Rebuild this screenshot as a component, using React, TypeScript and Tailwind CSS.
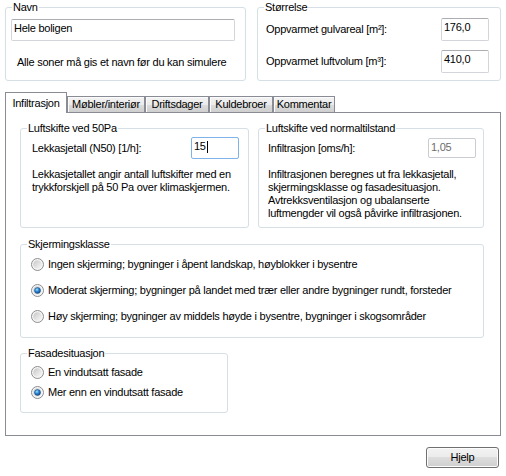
import type { ReactNode } from 'react';
import clsx from 'clsx';

const tabGradient = 'bg-[linear-gradient(to_bottom,#f3f3f3_0%,#ebebeb_50%,#dddddd_50%,#cfcfcf_100%)]';

function GroupBox({ title, className, children }: { title: string; className?: string; children: ReactNode }) {
  return (
    <fieldset className={clsx('rounded-[3px] border border-[#d5dfe5]', className)}>
      <legend className="ml-[6px] px-px leading-[13px]">{title}</legend>
      {children}
    </fieldset>
  );
}

function TextBox({ value, className, focused = false, disabled = false }: { value: string; className?: string; focused?: boolean; disabled?: boolean }) {
  return (
    <div
      className={clsx(
        'flex shrink-0 items-start rounded-[2px] border bg-white px-[2px] pt-[2px]',
        focused && 'border-[#7eb4ea]',
        disabled && 'border-[#c9cdd2] text-[#6d6d6d]',
        !focused && !disabled && 'border-[#d2d5da] border-t-[#abadb3]',
        className,
      )}
    >
      <span className="whitespace-nowrap">{value}</span>
      {focused ? <span className="ml-px mt-px h-[12px] w-px bg-black" /> : null}
    </div>
  );
}

function Radio({ label, checked = false }: { label: string; checked?: boolean }) {
  return (
    <label className="flex h-[13px] items-center gap-[4px] whitespace-nowrap">
      <svg width="13" height="13" viewBox="0 0 13 13" className="shrink-0">
        <defs>
          <linearGradient id="radio-fill" x1="0" y1="0" x2="1" y2="1">
            <stop offset="0" stopColor="#c6c6c6" />
            <stop offset="1" stopColor="#fafafa" />
          </linearGradient>
          <radialGradient id="radio-dot" cx="0.4" cy="0.35" r="0.7">
            <stop offset="0" stopColor="#9fe3ff" />
            <stop offset="0.45" stopColor="#2d8ad8" />
            <stop offset="1" stopColor="#0d3f76" />
          </radialGradient>
        </defs>
        <circle cx="6.5" cy="6.5" r="6" fill="#f5f5f5" stroke="#8b8d8f" />
        <circle cx="6.5" cy="6.5" r="4.3" fill="url(#radio-fill)" />
        {checked ? <circle cx="6.5" cy="6.5" r="3" fill="url(#radio-dot)" stroke="#1b4f85" strokeWidth="0.5" /> : null}
      </svg>
      <span>{label}</span>
    </label>
  );
}

const tabs = [
  { label: 'Møbler/interiør', width: 'w-[78px]' },
  { label: 'Driftsdager', width: 'w-[64px]' },
  { label: 'Kuldebroer', width: 'w-[64px]' },
  { label: 'Kommentar', width: 'w-[62px]' },
];

export default function App() {
  return (
    <div className="flex h-[476px] w-[506px] flex-col bg-white pl-[5px] pt-px font-['Liberation_Sans',Arial,sans-serif] text-[11px] leading-[13px] tracking-[-0.25px] text-black">
      <div className="flex gap-[11px]">
        <GroupBox title="Navn" className="h-[80px] w-[241px]">
          <div className="pl-[5px] pt-[5px]">
            <TextBox value="Hele boligen" className="h-[22px] w-[224px]" />
            <p className="ml-[6px] mt-[15px]">Alle soner må gis et navn før du kan simulere</p>
          </div>
        </GroupBox>
        <GroupBox title="Størrelse" className="h-[80px] w-[244px]">
          <div className="flex flex-col gap-[9px] pl-[8px] pr-[11px] pt-[4px]">
            <div className="flex items-center justify-between">
              <span>Oppvarmet gulvareal [m²]:</span>
              <TextBox value="176,0" className="h-[23px] w-[48px]" />
            </div>
            <div className="flex items-center justify-between">
              <span>Oppvarmet luftvolum [m³]:</span>
              <TextBox value="410,0" className="h-[23px] w-[48px]" />
            </div>
          </div>
        </GroupBox>
      </div>

      <div className="mt-[11px] flex h-[20px] items-end">
        <div className="relative z-10 -mb-px flex h-[21px] w-[62px] items-center justify-center border border-b-0 border-[#898c95] bg-white">
          Infiltrasjon
        </div>
        {tabs.map((tab) => (
          <div
            key={tab.label}
            className={clsx('flex h-[16px] items-center justify-center border border-b-0 border-[#898c95] shadow-[inset_1px_1px_0_#fbfbfb]', tabGradient, tab.width)}
          >
            {tab.label}
          </div>
        ))}
      </div>

      <div className="h-[324px] w-[496px] border border-[#898c95] pl-[14px] pt-[9px]">
        <div className="flex gap-[9px]">
          <GroupBox title="Luftskifte ved 50Pa" className="h-[106px] w-[229px]">
            <div className="pl-[11px] pr-[9px] pt-[2px]">
              <div className="flex items-center justify-between">
                <span>Lekkasjetall (N50) [1/h]:</span>
                <TextBox value="15" focused className="h-[22px] w-[48px]" />
              </div>
              <p className="mt-[9px] whitespace-nowrap">
                Lekkasjetallet angir antall luftskifter med en
                <br />
                trykkforskjell på 50 Pa over klimaskjermen.
              </p>
            </div>
          </GroupBox>
          <GroupBox title="Luftskifte ved normaltilstand" className="h-[106px] w-[226px]">
            <div className="pl-[9px] pr-[7px] pt-[3px]">
              <div className="flex items-center justify-between">
                <span>Infiltrasjon [oms/h]:</span>
                <TextBox value="1,05" disabled className="h-[20px] w-[48px]" />
              </div>
              <p className="mt-[10px] whitespace-nowrap">
                Infiltrasjonen beregnes ut fra lekkasjetall,
                <br />
                skjermingsklasse og fasadesituasjon.
                <br />
                Avtrekksventilasjon og ubalanserte
                <br />
                luftmengder vil også påvirke infiltrasjonen.
              </p>
            </div>
          </GroupBox>
        </div>

        <GroupBox title="Skjermingsklasse" className="mt-[10px] h-[100px] w-[464px]">
          <div className="flex flex-col gap-[13px] pl-[10px] pt-[7px]">
            <Radio label="Ingen skjerming; bygninger i åpent landskap, høyblokker i bysentre" />
            <Radio label="Moderat skjerming; bygninger på landet med trær eller andre bygninger rundt, forsteder" checked />
            <Radio label="Høy skjerming; bygninger av middels høyde i bysentre, bygninger i skogsområder" />
          </div>
        </GroupBox>

        <GroupBox title="Fasadesituasjon" className="mt-[9px] h-[66px] w-[208px]">
          <div className="flex flex-col gap-[7px] pl-[10px] pt-[6px]">
            <Radio label="En vindutsatt fasade" />
            <Radio label="Mer enn en vindutsatt fasade" checked />
          </div>
        </GroupBox>
      </div>

      <button
        type="button"
        className={clsx('mr-[7px] mt-[11px] h-[21px] w-[73px] self-end rounded-[3px] border border-[#707070] shadow-[inset_0_0_0_1px_#fcfcfc]', tabGradient)}
      >
        Hjelp
      </button>
    </div>
  );
}
